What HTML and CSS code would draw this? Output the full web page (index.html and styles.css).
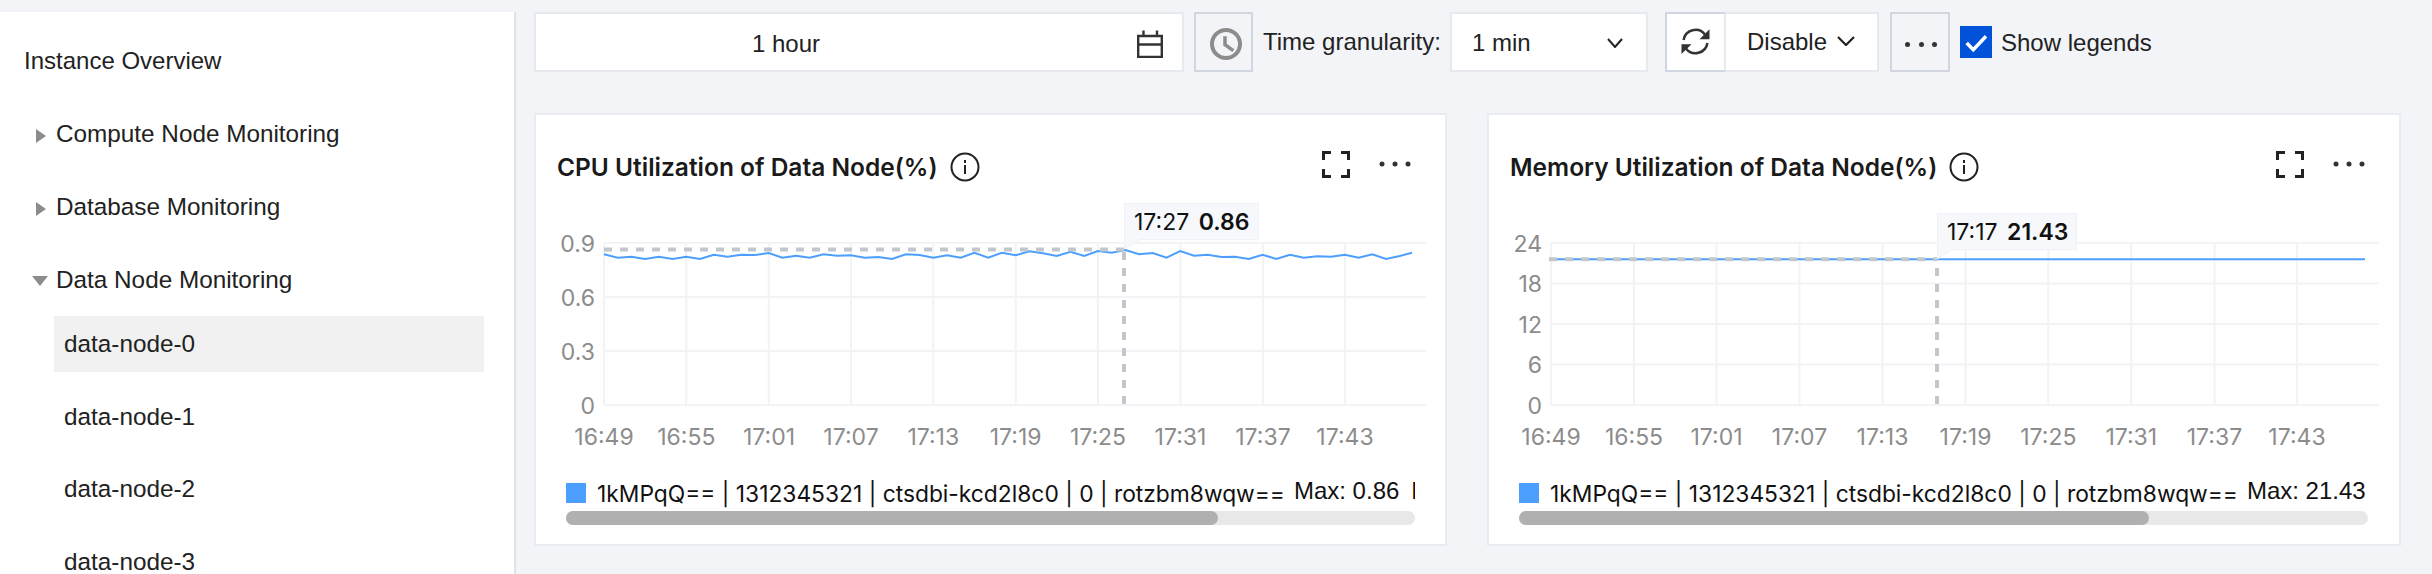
FILE: index.html
```html
<!DOCTYPE html>
<html lang="en">
<head>
<meta charset="utf-8">
<title>Data Node Monitoring</title>
<link rel="stylesheet" href="styles.css">
</head>
<body>
<aside class="sidebar">
  <div class="nav-row nav-top">Instance Overview</div>
  <div class="nav-row"><span class="arrow arrow-right"></span>Compute Node Monitoring</div>
  <div class="nav-row"><span class="arrow arrow-right"></span>Database Monitoring</div>
  <div class="nav-row"><span class="arrow arrow-down"></span>Data Node Monitoring</div>
  <ul class="node-list">
    <li class="node active">data-node-0</li>
    <li class="node">data-node-1</li>
    <li class="node">data-node-2</li>
    <li class="node">data-node-3</li>
  </ul>
</aside>
<main class="main">
  <div class="toolbar">
    <div class="box date">
      <span>1 hour</span>
      <svg class="ico-cal" width="26" height="28" viewBox="0 0 26 28" fill="none" stroke="#333" stroke-width="2.400"><path d="M1.200 6h23.600v21H1.200zM1.200 14.500h23.600M6.500 .5v5M20 .5v5"/></svg>
    </div>
    <div class="btn clock">
      <svg class="ico-clock" width="36" height="36" viewBox="0 0 36 36" fill="none" stroke="#8c8c8c" stroke-width="4"><circle cx="18" cy="18" r="14"/><path d="M17 10.300v8.400l8.300 6" stroke-width="3.500"/></svg>
    </div>
    <span class="tb-label">Time granularity:</span>
    <div class="box select">
      <span>1 min</span>
      <svg width="16" height="10" viewBox="0 0 16 10" fill="none" stroke="#222" stroke-width="2"><path d="M1 1l7 8 7-8"/></svg>
    </div>
    <div class="btn refresh">
      <svg width="30" height="30" viewBox="0 0 30 30"><path d="M2.600 13A12 12 0 0 1 24 7.500M26.400 16A12 12 0 0 1 5 21.500" fill="none" stroke="#333" stroke-width="2.500"/><path d="M28.500 2.200V12.200H18.500zM.5 17.200H10.500L.5 27z" fill="#333"/></svg>
    </div>
    <div class="box disable">
      <span>Disable</span>
      <svg class="chev" width="18" height="10" viewBox="0 0 18 10" fill="none" stroke="#222" stroke-width="2.200"><path d="M1 1l8 8 8-8"/></svg>
    </div>
    <div class="btn more">
      <span class="dot"></span><span class="dot"></span><span class="dot"></span>
    </div>
    <label class="legend-toggle">
      <span class="check">
        <svg width="24" height="24" viewBox="0 0 24 24" fill="none" stroke="#fff" stroke-width="3.500"><path d="M2.700 13l6.600 6.700L22 6.300"/></svg>
      </span>
      <span class="toggle-text">Show legends</span>
    </label>
  </div>

  <div class="cards">
    <section class="card">
      <header class="card-head">
        <h2 class="card-title">CPU Utilization of Data Node(%)</h2>
        <svg class="info" width="30" height="30" viewBox="0 0 30 30" fill="none" stroke="#222" stroke-width="2"><circle cx="15" cy="15" r="13.500"/><path d="M15 13v9M15 8v3"/></svg>
        <svg class="expand" width="28" height="27" viewBox="0 0 28 27" fill="none" stroke="#222" stroke-width="3"><path d="M9 1.500H1.500V9M19 1.500H26.500V9M9 25.500H1.500V18M19 25.500H26.500V18"/></svg>
        <svg class="menu" width="32" height="6" viewBox="0 0 32 6" fill="#333"><circle cx="3" cy="3" r="2.500"/><circle cx="16" cy="3" r="2.500"/><circle cx="29" cy="3" r="2.500"/></svg>
      </header>
      <svg class="chart" width="909" height="270" viewBox="536 195 909 270">
        <g class="grid">
          <path d="M604 243H1426M604 297H1426M604 351H1426M604 405H1426"/>
          <path d="M604 243V405M686.300 243V405M768.700 243V405M851 243V405M933.300 243V405M1015.700 243V405M1098 243V405M1180.500 243V405M1263 243V405M1345 243V405"/>
        </g>
        <g class="y-labels">
          <text x="595" y="252">0.9</text>
          <text x="595" y="306">0.6</text>
          <text x="595" y="360">0.3</text>
          <text x="595" y="414">0</text>
        </g>
        <g class="x-labels">
          <text x="604" y="445">16:49</text><text x="686.300" y="445">16:55</text><text x="769" y="445">17:01</text><text x="851" y="445">17:07</text><text x="933.300" y="445">17:13</text><text x="1015.700" y="445">17:19</text><text x="1098" y="445">17:25</text><text x="1180.500" y="445">17:31</text><text x="1263" y="445">17:37</text><text x="1345" y="445">17:43</text>
        </g>
        <polyline class="series" points="604,254.300 617.700,257.700 631.400,256.700 645.200,259 658.900,256.700 672.600,259 686.300,256.700 700,259 713.800,254.700 727.500,256.700 741.200,254.700 754.900,255 768.600,253 782.400,257.700 796.100,255.700 809.800,257.700 823.500,254.300 837.200,255.700 851,255.300 864.700,257.700 878.400,257 892.100,259 905.800,254.300 919.600,255 933.300,257.700 947,255.300 960.700,257.700 974.400,252.700 988.200,257.700 1001.900,252.700 1015.600,255.300 1029.300,251.300 1043,253.300 1056.800,256 1070.500,251.700 1084.200,256 1097.900,251 1111.600,252.700 1125.400,250 1139.100,254.300 1152.800,253 1166.500,257.700 1180.200,251 1194,255.700 1207.700,254.700 1221.400,257 1235.100,256.700 1248.800,259 1262.600,254.700 1276.300,259 1290,254.700 1303.700,257.700 1317.400,256.300 1331.200,256.700 1344.900,254.700 1358.600,257.700 1372.300,254.300 1386,259 1399.800,256 1412,252.700"/>
        <path class="cross" d="M604 249.500H1124M1124 404V252"/>
        <path class="tip-box" d="M1124.500 203.500H1258.500V239.500H1140L1124.500 249V203.500Z"/>
        <text class="tip-text" x="1134" y="230">17:27 <tspan class="tip-value" dx="3">0.86</tspan></text>
      </svg>
      <div class="legend">
        <div class="legend-row">
          <span class="swatch"></span>
          <span class="legend-name">1kMPqQ== | 1312345321 | ctsdbi-kcd2l8c0 | 0 | rotzbm8wqw==</span>
          <span class="legend-stat">Max: 0.86</span>
          <span class="legend-stat">Min: 0.81</span>
        </div>
        <div class="track"><div class="thumb thumb-cpu"></div></div>
      </div>
    </section>

    <section class="card">
      <header class="card-head">
        <h2 class="card-title">Memory Utilization of Data Node(%)</h2>
        <svg class="info" width="30" height="30" viewBox="0 0 30 30" fill="none" stroke="#222" stroke-width="2"><circle cx="15" cy="15" r="13.500"/><path d="M15 13v9M15 8v3"/></svg>
        <svg class="expand" width="28" height="27" viewBox="0 0 28 27" fill="none" stroke="#222" stroke-width="3"><path d="M9 1.500H1.500V9M19 1.500H26.500V9M9 25.500H1.500V18M19 25.500H26.500V18"/></svg>
        <svg class="menu" width="32" height="6" viewBox="0 0 32 6" fill="#333"><circle cx="3" cy="3" r="2.500"/><circle cx="16" cy="3" r="2.500"/><circle cx="29" cy="3" r="2.500"/></svg>
      </header>
      <svg class="chart" width="910" height="270" viewBox="1489 195 910 270">
        <g class="grid">
          <path d="M1551 243H2379M1551 283.500H2379M1551 324H2379M1551 364.500H2379M1551 405H2379"/>
          <path d="M1551 243V405M1634 243V405M1716.500 243V405M1799.500 243V405M1882.500 243V405M1965.500 243V405M2048.300 243V405M2131.300 243V405M2214.500 243V405M2297 243V405"/>
        </g>
        <g class="y-labels">
          <text x="1542" y="252">24</text>
          <text x="1542" y="292">18</text>
          <text x="1542" y="333">12</text>
          <text x="1542" y="373">6</text>
          <text x="1542" y="414">0</text>
        </g>
        <g class="x-labels">
          <text x="1551" y="445">16:49</text><text x="1634" y="445">16:55</text><text x="1716.500" y="445">17:01</text><text x="1799.500" y="445">17:07</text><text x="1882.500" y="445">17:13</text><text x="1965.500" y="445">17:19</text><text x="2048.300" y="445">17:25</text><text x="2131.300" y="445">17:31</text><text x="2214.500" y="445">17:37</text><text x="2297" y="445">17:43</text>
        </g>
        <path class="series" d="M1551 259.300H2365"/>
        <path class="cross" d="M1549 259.300H1937M1937 404V268"/>
        <path class="tip-box" d="M1937.500 213.500H2076.500V249.500H1952L1937.500 259V213.500Z"/>
        <text class="tip-text" x="1947" y="240">17:17 <tspan class="tip-value" dx="3">21.43</tspan></text>
      </svg>
      <div class="legend">
        <div class="legend-row">
          <span class="swatch"></span>
          <span class="legend-name">1kMPqQ== | 1312345321 | ctsdbi-kcd2l8c0 | 0 | rotzbm8wqw==</span>
          <span class="legend-stat">Max: 21.43</span>
        </div>
        <div class="track"><div class="thumb thumb-mem"></div></div>
      </div>
    </section>
  </div>
</main>
</body>
</html>
```
FILE: styles.css
```css
* { box-sizing: border-box; }
html, body { margin: 0; height: 574px; overflow: hidden; }
body {
  display: flex;
  background: #f2f4f8;
  color: #222;
  font-family: "Liberation Sans", Arial, sans-serif;
  font-size: 24px;
}

/* Sidebar */
.sidebar {
  flex: 0 0 516px;
  margin-top: 12px;
  padding-top: 12px;
  background: #fff;
  border-right: 2px solid #dfe2e9;
  overflow: hidden;
  font-size: 24.3px;
}
.nav-row {
  display: flex;
  align-items: center;
  height: 73px;
  padding-left: 32px;
}
.nav-top { padding-left: 24px; font-size: 24px; }
.arrow { display: block; width: 0; height: 0; }
.arrow-right {
  flex: 0 0 0;
  margin: 4px 10px 0 4px;
  border-style: solid;
  border-width: 7px 0 7px 10px;
  border-color: transparent transparent transparent #8c8c8c;
}
.arrow-down {
  flex: 0 0 0;
  margin: 3px 8px 0 0;
  border-style: solid;
  border-width: 10px 8px 0 8px;
  border-color: #8c8c8c transparent transparent transparent;
}
.node-list {
  display: flex;
  flex-direction: column;
  gap: 16.500px;
  list-style: none;
  margin: 0 30px 0 54px;
  padding: 0;
}
.node {
  display: flex;
  flex: none;
  align-items: center;
  height: 56px;
  padding-left: 10px;
}
.active { background: #f1f1f1; }

/* Toolbar */
.main { flex: 1; min-width: 0; padding: 12px 31px 0 18px; }
.toolbar { display: flex; align-items: center; height: 60px; margin-bottom: 41px; }
.box {
  display: flex;
  align-items: center;
  height: 60px;
  background: #fff;
  border: 2px solid #e6e9f0;
}
.btn {
  display: flex;
  align-items: center;
  justify-content: center;
  height: 60px;
  border: 2px solid #cfd6e0;
}
.date { width: 650px; margin-right: 10px; padding-left: 216px; }
.date span { flex: 1; padding-top: 3px; }
.ico-cal { margin: 3px 19px 0 0; }
.clock { width: 59px; margin-right: 10px; }
.ico-clock { margin: 4px 0 0 5px; }
.tb-label { width: 179px; margin-right: 8px; white-space: nowrap; }
.select { width: 198px; margin-right: 17px; padding: 2px 23px 0 20px; justify-content: space-between; }
.refresh { width: 61px; background: #fff; border-right-color: #e6e9f0; border-bottom-color: #cfd6e0; }
.disable { width: 153px; margin-right: 11px; padding: 0 22px 0 21px; justify-content: space-between; border-left: 0; }
.chev { margin-bottom: 3px; }
.more { width: 60px; margin-right: 10px; padding-left: 2px; gap: 8.300px; }
.dot { width: 5px; height: 5px; margin-top: 4px; border-radius: 50%; background: #333; }
.legend-toggle { display: flex; align-items: center; gap: 9px; white-space: nowrap; }
.toggle-text { padding-top: 2px; }
.check {
  display: flex;
  align-items: center;
  justify-content: center;
  width: 32px;
  height: 32px;
  background: #0052d9;
}

/* Cards */
.cards { display: grid; grid-template-columns: 913px 914px; column-gap: 40px; }
.card { height: 433px; background: #fff; border: 2px solid #e8ebf2; }
.card-head { display: flex; align-items: center; height: 80px; padding: 24px 0 0 21px; }
.card-title {
  margin: 0;
  font-family: Inter, "Liberation Sans", sans-serif;
  font-size: 24.500px;
  font-weight: 600;
  color: #1a1a1a;
  white-space: nowrap;
}
.info { margin-left: 12px; }
.expand { margin-left: auto; margin-right: 29px; margin-bottom: 6px; }
.menu { margin-right: 34px; margin-bottom: 6px; }
.chart { display: block; }
.grid path { fill: none; stroke: #f2f3f5; stroke-width: 2; }
.y-labels text, .x-labels text {
  font-family: Inter, "Liberation Sans", sans-serif;
  font-size: 23px;
  fill: #8c8c8c;
}
.y-labels text { text-anchor: end; }
.x-labels text { text-anchor: middle; }
.series { fill: none; stroke: #4c9ffe; stroke-width: 2; }
.cross { fill: none; stroke: #c2c7ce; stroke-width: 4; stroke-dasharray: 8 8; }
.tip-box { fill: #f6f8fb; stroke: #eef1f6; stroke-width: 1; }
.tip-text { font-family: Inter, "Liberation Sans", sans-serif; font-size: 23px; fill: #111; }
.tip-value { font-weight: 600; }

/* Legend */
.legend { width: 849px; margin: 0 0 0 30px; }
.legend-row {
  display: flex;
  align-items: center;
  height: 46px;
  padding-top: 10px;
  overflow: hidden;
  white-space: nowrap;
  color: #111;
}
.swatch { flex: 0 0 20px; height: 20px; margin-right: 11px; background: #4c9ffe; }
.legend-name { flex: none; font-family: Inter, "Liberation Sans", sans-serif; font-size: 22.800px; margin-right: 9px; }
.legend-stat { flex: none; margin: 0 12px 4px 0; }
.track { height: 14px; border-radius: 7px; background: #e8e8e8; }
.thumb { height: 14px; border-radius: 7px; background: #b0b0b0; }
.thumb-cpu { width: 652px; }
.thumb-mem { width: 630px; }
```
